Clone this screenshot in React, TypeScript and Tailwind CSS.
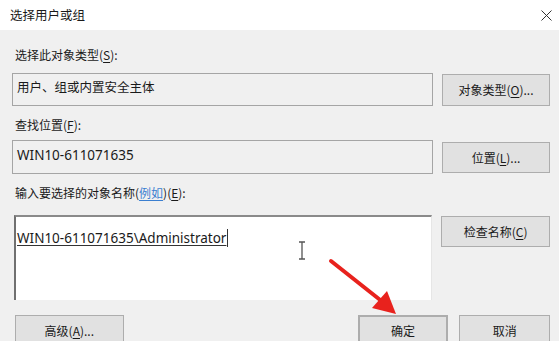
import React from "react";

const font = "font-['Noto_Sans_CJK_SC','Noto_Sans',sans-serif]";

const Btn = ({ children, className = "" }: { children: React.ReactNode; className?: string }) => (
  <div
    className={`flex items-center justify-center bg-[#e1e1e1] border border-[#adadad] text-[12px] text-[#1a1a1a] ${className}`}
  >
    {children}
  </div>
);

const U = ({ children }: { children: React.ReactNode }) => <span className="underline underline-offset-2">{children}</span>;

export default function App() {
  return (
    <div className={`relative w-[559px] h-[341px] overflow-hidden bg-[#f0f0f0] ${font}`}>
      {/* title bar */}
      <div className="h-[30px] bg-white flex items-center justify-between pl-[10px] pr-[7px]">
        <span className="text-[12.5px] text-[#1a1a1a]">选择用户或组</span>
        <svg width="11" height="11" viewBox="0 0 11 11">
          <path d="M0.5 0.5 L10.5 10.5 M10.5 0.5 L0.5 10.5" stroke="#333" strokeWidth="1" />
        </svg>
      </div>

      <div className="pl-[12px] pr-[9px]">
        <div className="mt-[17px] h-[16px] leading-[16px] pl-[3px] text-[12px] text-[#1a1a1a]">
          选择此对象类型(<U>S</U>):
        </div>
        <div className="mt-[10px] flex items-start gap-[9px]">
          <div className="w-[421px] h-[33px] border border-[#a5a5a5] pl-[4px] pt-[4px] text-[12.5px] leading-[18px] text-[#1a1a1a]">
            用户、组或内置安全主体
          </div>
          <Btn className="w-[108px] h-[32px] mt-[1px]">
            对象类型(<U>O</U>)...
          </Btn>
        </div>

        <div className="mt-[11px] h-[16px] leading-[16px] pl-[3px] text-[12px] text-[#1a1a1a]">
          查找位置(<U>F</U>):
        </div>
        <div className="mt-[7px] flex items-start gap-[9px]">
          <div className="w-[421px] h-[34px] border border-[#a5a5a5] pl-[4px] pt-[5px] text-[13.5px] leading-[18px] text-[#1a1a1a] font-['Noto_Sans',sans-serif]">
            WIN10-611071635
          </div>
          <Btn className="w-[108px] h-[31px] mt-[2px]">
            位置(<U>L</U>)...
          </Btn>
        </div>

        <div className="mt-[11px] h-[16px] leading-[16px] pl-[3px] text-[12px] text-[#1a1a1a]">
          输入要选择的对象名称(<span className="text-[#3b7fd0] underline underline-offset-2">例如</span>)(<U>E</U>):
        </div>
        <div className="mt-[14px] flex items-start gap-[9px]">
          <div className="ml-[2px] w-[419px] h-[85px] bg-white border-t-2 border-l-2 border-t-[#8a8a8a] border-l-[#707070] border-r border-r-[#e6e6e6] pl-[1px] pt-[7px]">
            <span className="inline-block border-r border-r-[#333] pr-[1px] text-[13.5px] leading-[18px] text-[#1a1a1a] underline underline-offset-2 decoration-[#333] font-['Noto_Sans',sans-serif]">
              WIN10-611071635\Administrator
            </span>
          </div>
          <Btn className="w-[109px] h-[31px] mt-[1px]">
            检查名称(<U>C</U>)
          </Btn>
        </div>

        <div className="mt-[15px] flex items-start">
          <Btn className="ml-[3px] w-[109px] h-[32px]">
            高级(<U>A</U>)...
          </Btn>
          <Btn className="ml-[234px] w-[91px] h-[32px] border-2 border-[#3a80c0]">确定</Btn>
          <Btn className="ml-[11px] w-[91px] h-[32px]">取消</Btn>
        </div>
      </div>

      {/* I-beam cursor */}
      <svg className="absolute left-[297px] top-[241px]" width="10" height="19" viewBox="0 0 10 19">
        <path d="M2 1 H8 M5 1 V18 M2 18 H8" stroke="#555" strokeWidth="1.3" fill="none" />
      </svg>

      {/* red arrow */}
      <svg className="absolute left-0 top-0 pointer-events-none" width="559" height="341" viewBox="0 0 559 341">
        <line x1="331" y1="261" x2="384" y2="303" stroke="#e8221d" strokeWidth="4" strokeLinecap="round" />
        <polygon points="396,314 372,308 387,291" fill="#e8221d" />
      </svg>
    </div>
  );
}
